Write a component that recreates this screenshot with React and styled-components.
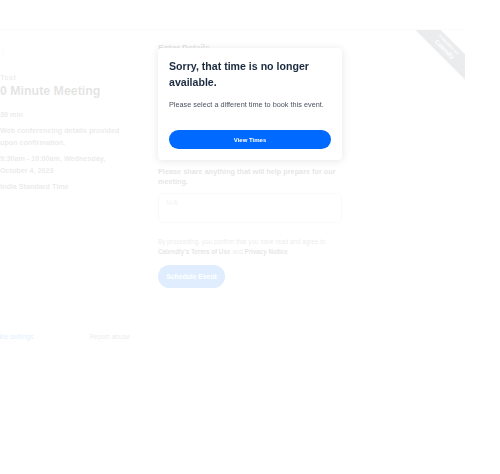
import React from 'react';
import styled, { createGlobalStyle } from 'styled-components';
import { ArrowLeft, Clock, Video, Calendar, Globe } from 'lucide-react';

const GlobalStyle = createGlobalStyle`
	* { box-sizing: border-box; }
	html, body {
		margin: 0;
		padding: 0;
		background: #fff;
		font-family: "Liberation Sans", Arial, sans-serif;
	}
`;

const details = [
	{ icon: Clock, text: '30 min' },
	{ icon: Video, text: 'Web conferencing details provided upon confirmation.' },
	{ icon: Calendar, text: '9:30am - 10:00am, Wednesday, October 4, 2023' },
	{ icon: Globe, text: 'India Standard Time' },
];

function App() {
	return (
		<Page>
			<GlobalStyle />
			<Card>
				<Ribbon>
					<small>POWERED BY</small>
					<b>Calendly</b>
				</Ribbon>
				<Side>
					<BackButton>
						<ArrowLeft size={9} strokeWidth={2.5} />
					</BackButton>
					<Owner>Test</Owner>
					<EventTitle>30 Minute Meeting</EventTitle>
					<DetailList>
						{details.map(({ icon: Icon, text }) => (
							<Detail key={text}>
								<Icon size={12} strokeWidth={2} />
								<span>{text}</span>
							</Detail>
						))}
					</DetailList>
					<SideFooter>
						<FooterLink $blue>Cookie settings</FooterLink>
						<FooterLink>Report abuse</FooterLink>
					</SideFooter>
				</Side>
				<Main>
					<Form>
						<Heading>Enter Details</Heading>
						<Label $top={4}>Name *</Label>
						<Input />
						<Label $top={8}>Email *</Label>
						<Input />
						<GuestButton>Add Guests</GuestButton>
						<Label $top={16}>
							Please share anything that will help prepare for our meeting.
						</Label>
						<TextArea placeholder="N/A" readOnly />
						<Terms>
							By proceeding, you confirm that you have read and agree to{' '}
							<b>Calendly's Terms of Use</b> and <b>Privacy Notice</b>.
						</Terms>
						<ScheduleButton>Schedule Event</ScheduleButton>
					</Form>
				</Main>
			</Card>
			<Overlay>
				<Modal>
					<ModalTitle>Sorry, that time is no longer available.</ModalTitle>
					<ModalText>Please select a different time to book this event.</ModalText>
					<PrimaryButton>View Times</PrimaryButton>
				</Modal>
			</Overlay>
		</Page>
	);
}

export default App;

const Page = styled.div`
	position: relative;
	width: 100%;
	height: 474px;
	overflow: hidden;
	padding-top: 29px;
`;

const Card = styled.div`
	position: relative;
	display: flex;
	width: 488px;
	height: 325px;
	margin-left: -23px;
	border-top: 1px solid #dcdcdc;
	overflow: hidden;
	background: #fff;
`;

const Ribbon = styled.div`
	position: absolute;
	top: 9px;
	right: -41px;
	width: 120px;
	height: 18px;
	transform: rotate(45deg);
	background: #5f666e;
	color: #fff;
	display: flex;
	flex-direction: column;
	align-items: center;
	justify-content: center;
	line-height: 1;

	small {
		font-size: 3.5px;
		font-weight: 700;
		letter-spacing: 0.3px;
	}
	b {
		font-size: 6px;
	}
`;

const Side = styled.div`
	width: 168px;
	flex-shrink: 0;
	display: flex;
	flex-direction: column;
	padding: 14px 15px 11px 16px;
`;

const BackButton = styled.div`
	width: 16px;
	height: 16px;
	margin-left: -5px;
	border-radius: 50%;
	border: 1px solid #d6d6d6;
	color: #0069ff;
	display: flex;
	align-items: center;
	justify-content: center;
`;

const Owner = styled.div`
	margin-top: 12px;
	margin-left: 7px;
	font-size: 8px;
	line-height: 12px;
	font-weight: 700;
	color: #6b6f75;
`;

const EventTitle = styled.h1`
	margin: 0;
	font-size: 12.4px;
	line-height: 14px;
	font-weight: 700;
	color: #1a1a1a;
`;

const DetailList = styled.div`
	margin-top: 11px;
	display: flex;
	flex-direction: column;
	gap: 4px;
`;

const Detail = styled.div`
	display: flex;
	align-items: flex-start;
	gap: 4px;
	margin-left: -9px;
	font-size: 7.2px;
	line-height: 12px;
	font-weight: 700;
	color: #4d5055;

	svg {
		flex-shrink: 0;
	}
`;

const SideFooter = styled.div`
	margin-top: auto;
	display: flex;
	justify-content: space-between;
	margin-left: -6px;
`;

const FooterLink = styled.span`
	font-size: 6.8px;
	line-height: 12px;
	color: ${(p) => (p.$blue ? '#0069ff' : '#4d5055')};
`;

const Main = styled.div`
	flex: 1;
	padding: 11px 12px 11px 13px;
`;

const Form = styled.div`
	width: 184px;
	display: flex;
	flex-direction: column;
`;

const Heading = styled.h2`
	margin: 0;
	font-size: 8.5px;
	line-height: 14px;
	font-weight: 700;
	color: #1a1a1a;
`;

const Label = styled.div`
	margin-top: ${(p) => p.$top}px;
	font-size: 7.3px;
	line-height: 10px;
	font-weight: 700;
	color: #1a1a1a;
`;

const Input = styled.div`
	height: 20px;
	border: 1px solid #b2b2b2;
	border-radius: 4px;
`;

const GuestButton = styled.div`
	margin-top: 8px;
	width: 52px;
	height: 16px;
	border: 1px solid #0069ff;
	border-radius: 20px;
	color: #0069ff;
	font-size: 6px;
	display: flex;
	align-items: center;
	justify-content: center;
`;

const TextArea = styled.textarea`
	margin-top: 6px;
	height: 30px;
	width: 100%;
	resize: none;
	border: 1px solid #c9c9c9;
	border-radius: 4px;
	padding: 5px 7px;
	font-family: "Liberation Sans", Arial, sans-serif;
	font-size: 7px;
	line-height: 8px;
	color: #1a1a1a;
	outline: none;

	&::placeholder {
		color: #8a8a8a;
	}
`;

const Terms = styled.p`
	margin: 14px 0 0;
	font-size: 6.3px;
	line-height: 10px;
	color: #4d5055;

	b {
		color: #1a1a1a;
	}
`;

const ScheduleButton = styled.button`
	margin-top: 8px;
	align-self: flex-start;
	width: 67px;
	height: 23px;
	border: none;
	border-radius: 40px;
	background: #0069ff;
	color: #fff;
	font-family: "Liberation Sans", Arial, sans-serif;
	font-size: 6.8px;
	font-weight: 700;
	padding: 0;
`;

const Overlay = styled.div`
	position: fixed;
	inset: 0;
	background: rgba(255, 255, 255, 0.88);
	display: flex;
	justify-content: center;
	align-items: flex-start;
	padding-top: 48px;
`;

const Modal = styled.div`
	width: 184px;
	padding: 10px 11px 11px;
	background: #fff;
	border-radius: 4px;
	box-shadow: 0 1px 8px rgba(0, 0, 0, 0.1);
	display: flex;
	flex-direction: column;
`;

const ModalTitle = styled.h3`
	margin: 0;
	font-size: 10.6px;
	line-height: 16px;
	font-weight: 700;
	color: #1b2a3e;
`;

const ModalText = styled.p`
	margin: 10px 0 0;
	font-size: 7.3px;
	line-height: 10px;
	color: #4d5361;
`;

const PrimaryButton = styled.button`
	margin-top: 20px;
	height: 19px;
	width: 100%;
	border: none;
	border-radius: 40px;
	background: #0069ff;
	color: #fff;
	font-family: "Liberation Sans", Arial, sans-serif;
	font-size: 6px;
	font-weight: 700;
	padding: 0;
`;
